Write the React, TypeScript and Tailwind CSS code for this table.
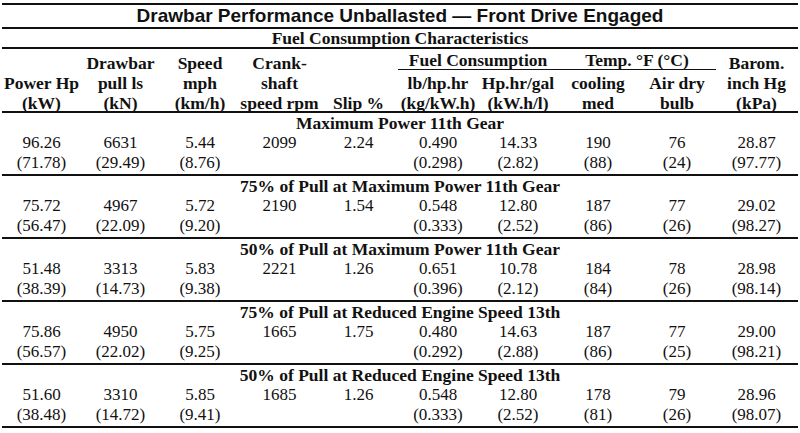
const cols = "grid grid-cols-[79px_79px_80px_79px_79px_80px_80px_80px_78px_81px]";

type Group = { title: string; top: string[]; bottom: string[] };

const groups: Group[] = [
  {
    title: "Maximum Power 11th Gear",
    top: ["96.26", "6631", "5.44", "2099", "2.24", "0.490", "14.33", "190", "76", "28.87"],
    bottom: ["(71.78)", "(29.49)", "(8.76)", "", "", "(0.298)", "(2.82)", "(88)", "(24)", "(97.77)"],
  },
  {
    title: "75% of Pull at Maximum Power 11th Gear",
    top: ["75.72", "4967", "5.72", "2190", "1.54", "0.548", "12.80", "187", "77", "29.02"],
    bottom: ["(56.47)", "(22.09)", "(9.20)", "", "", "(0.333)", "(2.52)", "(86)", "(26)", "(98.27)"],
  },
  {
    title: "50% of Pull at Maximum Power 11th Gear",
    top: ["51.48", "3313", "5.83", "2221", "1.26", "0.651", "10.78", "184", "78", "28.98"],
    bottom: ["(38.39)", "(14.73)", "(9.38)", "", "", "(0.396)", "(2.12)", "(84)", "(26)", "(98.14)"],
  },
  {
    title: "75% of Pull at Reduced Engine Speed 13th",
    top: ["75.86", "4950", "5.75", "1665", "1.75", "0.480", "14.63", "187", "77", "29.00"],
    bottom: ["(56.57)", "(22.02)", "(9.25)", "", "", "(0.292)", "(2.88)", "(86)", "(25)", "(98.21)"],
  },
  {
    title: "50% of Pull at Reduced Engine Speed 13th",
    top: ["51.60", "3310", "5.85", "1685", "1.26", "0.548", "12.80", "178", "79", "28.96"],
    bottom: ["(38.48)", "(14.72)", "(9.41)", "", "", "(0.333)", "(2.52)", "(81)", "(26)", "(98.07)"],
  },
];

function HeadCell({ lines, span }: { lines: string[]; span?: boolean }) {
  return (
    <div className={`flex flex-col justify-end items-center ${span ? "row-span-2" : ""}`}>
      {lines.map((l) => (
        <span key={l} className="whitespace-nowrap">
          {l}
        </span>
      ))}
    </div>
  );
}

export default function App() {
  return (
    <div className="w-[800px] h-[433px] bg-white pt-[3px] px-[2px] text-[#111] font-['Liberation_Serif','Times_New_Roman',serif] overflow-hidden">
      {/* Title */}
      <div className="border-y-2 border-[#111] h-[26px] text-center font-['Liberation_Sans',Arial,sans-serif] font-bold text-[19px] leading-[22px]">
        Drawbar Performance Unballasted — Front Drive Engaged
      </div>

      <div className="border-b-2 border-[#111] h-[20px] text-center font-bold text-[17.5px] leading-[18px]">
        Fuel Consumption Characteristics
      </div>

      {/* Column headers */}
      <div className={`${cols} grid-rows-[22px_40px] pt-[2px] h-[64px] border-b-2 border-[#111] font-bold text-[17.5px] leading-[20px]`}>
        <HeadCell span lines={["Power Hp", "(kW)"]} />
        <HeadCell span lines={["Drawbar", "pull ls", "(kN)"]} />
        <HeadCell span lines={["Speed", "mph", "(km/h)"]} />
        <HeadCell span lines={["Crank-", "shaft", "speed rpm"]} />
        <HeadCell span lines={["Slip %"]} />
        <div className="col-span-2 h-[21px] border-b border-[#111] text-center -mt-[2px] pt-[1px]">Fuel Consumption</div>
        <div className="col-span-2 h-[21px] border-b border-[#111] text-center -mt-[2px] pt-[1px]">Temp. °F (°C)</div>
        <HeadCell span lines={["Barom.", "inch Hg", "(kPa)"]} />
        <HeadCell lines={["lb/hp.hr", "(kg/kW.h)"]} />
        <HeadCell lines={["Hp.hr/gal", "(kW.h/l)"]} />
        <HeadCell lines={["cooling", "med"]} />
        <HeadCell lines={["Air dry", "bulb"]} />
      </div>

      {/* Data groups */}
      {groups.map((g) => (
        <div key={g.title} className="h-[63px] border-b-2 border-[#111] text-[17px] leading-[20px]">
          <div className="text-center font-bold text-[17.5px]">{g.title}</div>
          <div className={cols}>
            {g.top.map((v, i) => (
              <div key={i} className="text-center">
                {v}
              </div>
            ))}
          </div>
          <div className={cols}>
            {g.bottom.map((v, i) => (
              <div key={i} className="text-center h-[20px]">
                {v}
              </div>
            ))}
          </div>
        </div>
      ))}
    </div>
  );
}
